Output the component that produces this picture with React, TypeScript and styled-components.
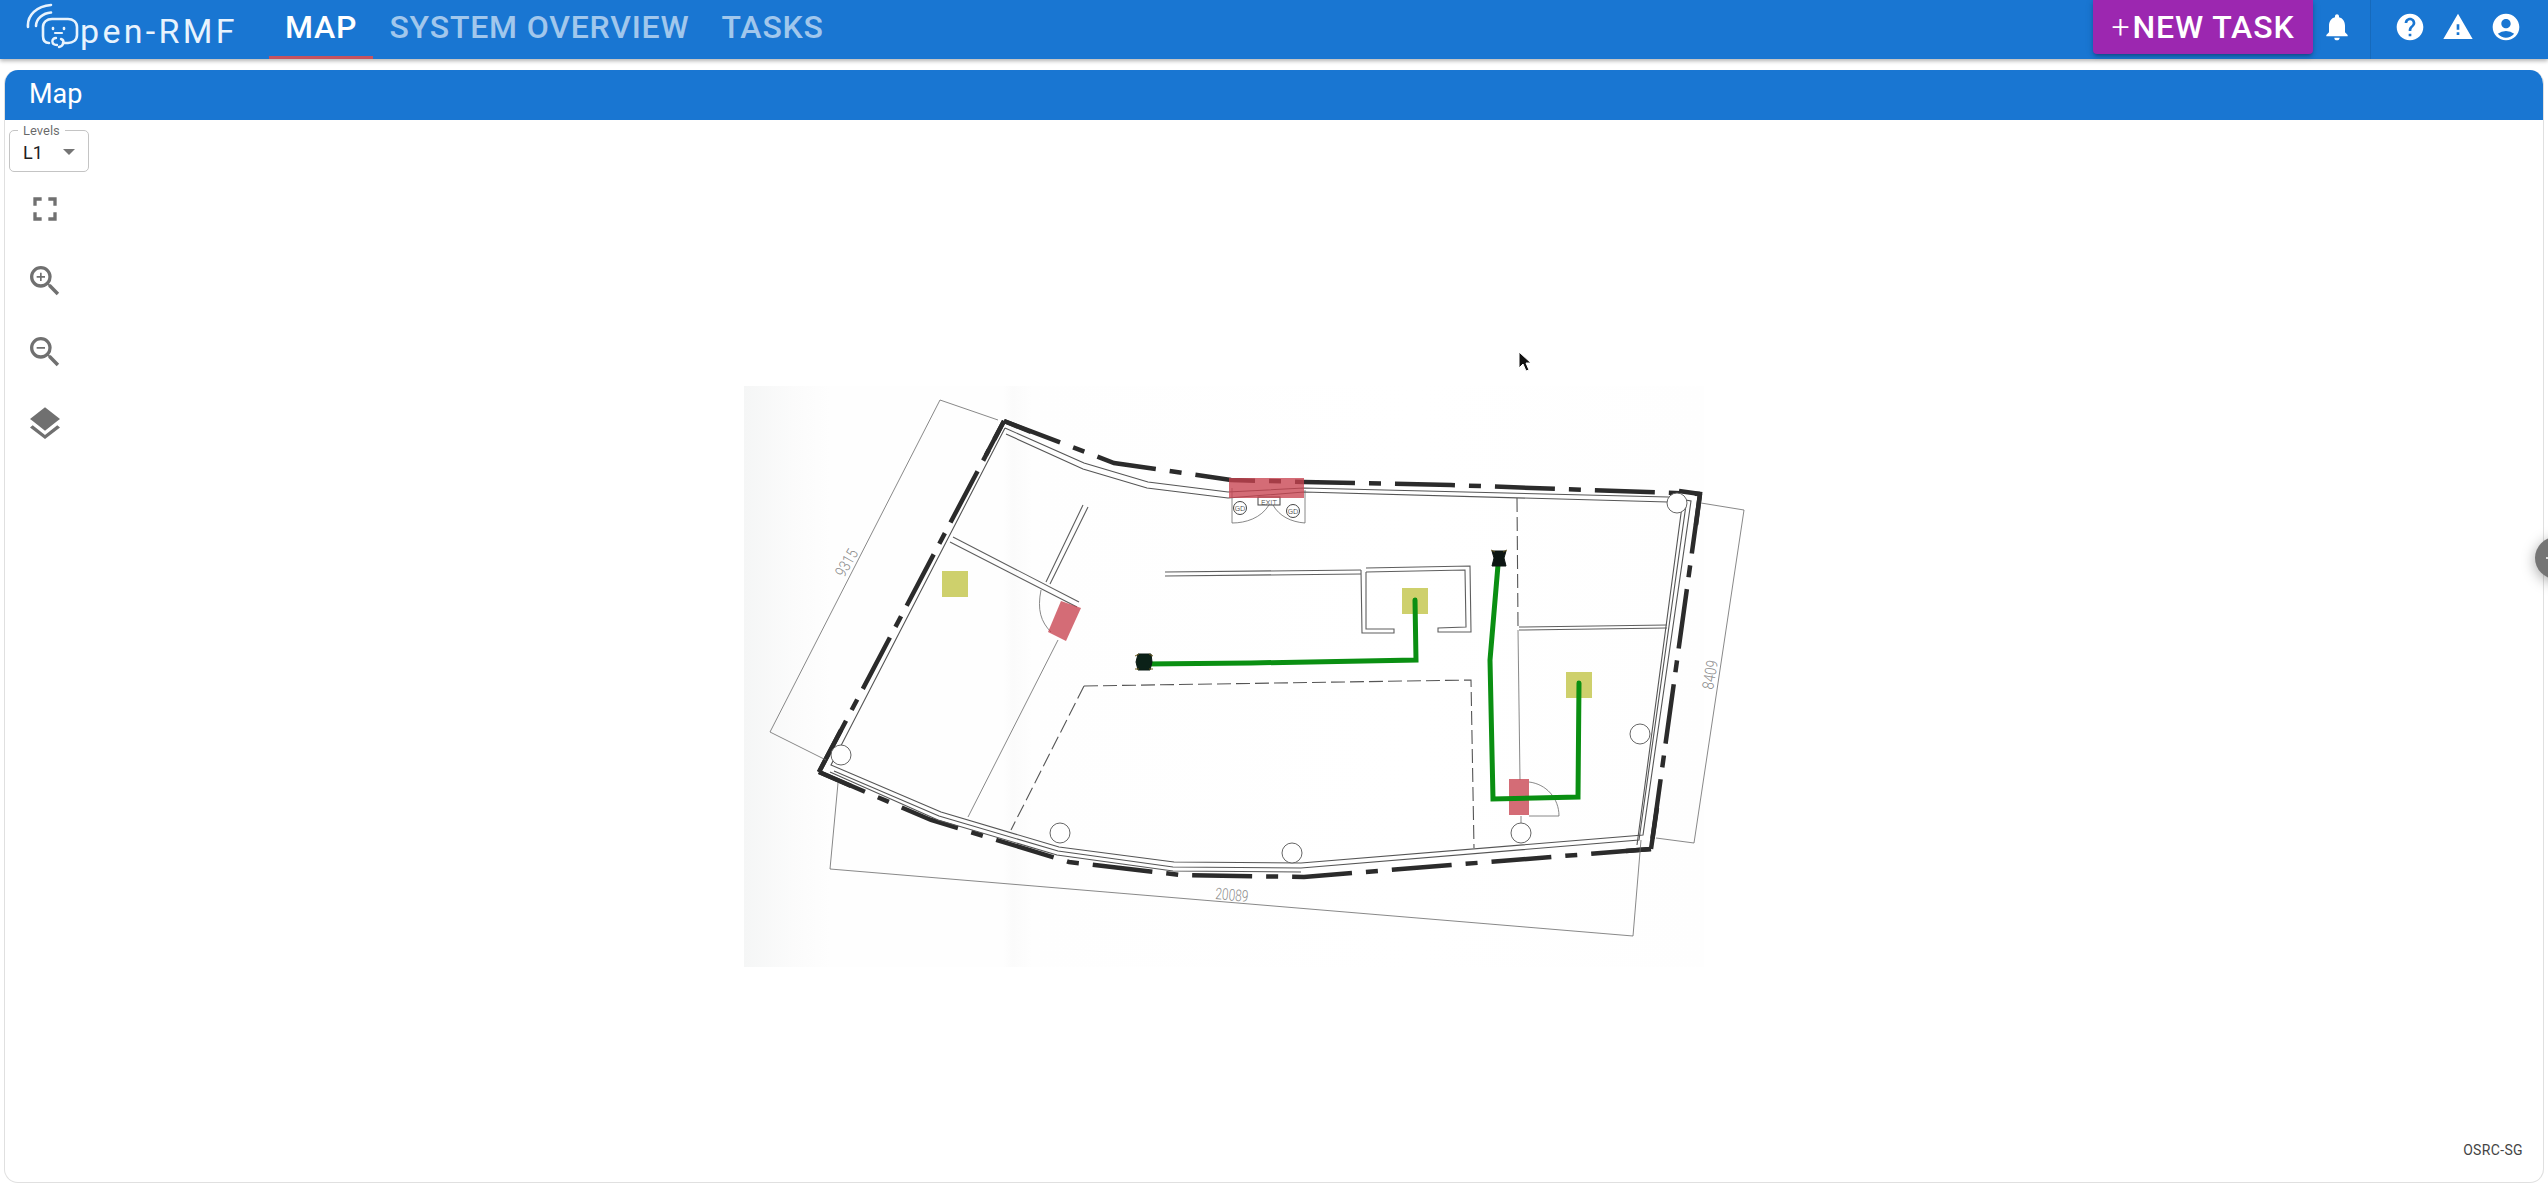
import React from "react";
import styled, { createGlobalStyle } from "styled-components";
import {
  MdNotifications,
  MdHelp,
  MdWarning,
  MdAccountCircle,
  MdFullscreen,
  MdZoomIn,
  MdZoomOut,
  MdLayers,
} from "react-icons/md";

const Global = createGlobalStyle`
  html, body { margin: 0; padding: 0; height: 100%; background: #fff; overflow: hidden; }
  body { font-family: Roboto, "Liberation Sans", sans-serif; }
  #root { height: 100%; }
`;

const Page = styled.div`
  position: relative;
  height: 1189px;
  display: flex;
  flex-direction: column;
  overflow: hidden;
`;

const AppBar = styled.header`
  flex: none;
  height: 59px;
  background: #1976d2;
  box-shadow: 0 2px 4px rgba(0, 0, 0, 0.3);
  display: flex;
  align-items: flex-start;
  padding: 0 26px 0 26px;
  position: relative;
  z-index: 2;
`;

const LogoBox = styled.div`
  width: 243px;
  height: 54px;
  display: flex;
  flex: none;
  color: #e8f3fd;
`;

const LogoMark = styled.svg`
  width: 54px;
  height: 54px;
  flex: none;
`;

const LogoText = styled.span`
  font-family: Roboto, sans-serif;
  font-size: 34px;
  font-weight: 400;
  letter-spacing: 3.3px;
  line-height: 40px;
  margin-top: 11px;
  white-space: nowrap;
`;

const Tabs = styled.nav`
  display: flex;
`;

const Tab = styled.div<{ $active?: boolean }>`
  height: 59px;
  padding: 0 16px 3px;
  box-sizing: border-box;
  display: flex;
  align-items: center;
  font-size: 32px;
  font-weight: 500;
  letter-spacing: 0.82px;
  text-transform: uppercase;
  color: ${(p) => (p.$active ? "#ffffff" : "rgba(255,255,255,0.6)")};
  border-bottom: 3px solid ${(p) => (p.$active ? "#c5525f" : "transparent")};
`;

const Spacer = styled.div`
  flex: 1;
`;

const NewTask = styled.button`
  height: 54px;
  width: 220px;
  border: 0;
  padding: 0;
  background: #9c27b0;
  color: #fff;
  font-family: Roboto, sans-serif;
  font-size: 32px;
  font-weight: 500;
  letter-spacing: 0.9px;
  border-radius: 0 0 4px 4px;
  box-shadow: 0 3px 3px -2px rgba(0, 0, 0, 0.2), 0 3px 4px rgba(0, 0, 0, 0.14),
    0 1px 8px rgba(0, 0, 0, 0.12);
`;

const Plus = styled.span`
  font-weight: 300;
  margin-right: 2px;
`;

const BarIcon = styled.div<{ $gap: number }>`
  height: 54px;
  width: 32px;
  margin-left: ${(p) => p.$gap}px;
  display: flex;
  align-items: center;
  justify-content: center;
  color: #fff;
  font-size: 32px;
`;

const BarDivider = styled.div`
  width: 1px;
  height: 59px;
  margin-left: 17px;
  background: rgba(0, 0, 0, 0.1);
`;

const Card = styled.section`
  flex: none;
  margin: 11px 4px 0 4px;
  height: 1113px;
  box-sizing: border-box;
  border: 1px solid #e0e0e0;
  border-top: 0;
  border-radius: 14px;
  overflow: hidden;
  display: flex;
  flex-direction: column;
  background: #fff;
`;

const CardHeader = styled.h2`
  flex: none;
  height: 50px;
  margin: 0 -1px;
  padding: 0 25px;
  background: #1976d2;
  color: #fff;
  font-size: 27px;
  font-weight: 400;
  line-height: 48px;
`;

const MapBody = styled.div`
  position: relative;
  flex: 1;
  padding: 10px 0 0 4px;
`;

const LevelBox = styled.div`
  position: relative;
  width: 80px;
  height: 42px;
  box-sizing: border-box;
  border: 1px solid #c4c4c4;
  border-radius: 5px;
  display: flex;
  align-items: center;
  justify-content: space-between;
  padding: 2px 13px 0 13px;
  font-size: 18px;
  color: #212121;
`;

const LevelLegend = styled.span`
  position: absolute;
  left: 8px;
  top: -8px;
  padding: 0 5px;
  background: #fff;
  font-size: 13px;
  line-height: 15px;
  color: rgba(0, 0, 0, 0.6);
`;

const Caret = styled.i`
  width: 0;
  height: 0;
  border-left: 6px solid transparent;
  border-right: 6px solid transparent;
  border-top: 6px solid #757575;
`;

const Controls = styled.div`
  display: flex;
  flex-direction: column;
  width: 72px;
  margin-top: 1px;
`;

const ControlButton = styled.div`
  width: 72px;
  height: 71.7px;
  display: flex;
  align-items: center;
  justify-content: center;
  font-size: 40px;
  color: #707070;
`;

const PlanSvg = styled.svg`
  position: absolute;
  left: 739px;
  top: 266px;
  width: 1010px;
  height: 582px;
`;

const PlanLabel = styled.text`
  font-family: Roboto, sans-serif;
  font-weight: 300;
  fill: #8a8a8a;
`;

const CursorSvg = styled.svg`
  position: absolute;
  left: 1513px;
  top: 231px;
  width: 14px;
  height: 22px;
`;

const Attribution = styled.span`
  position: absolute;
  right: 20px;
  bottom: 24px;
  font-size: 14px;
  line-height: 16px;
  letter-spacing: 0.35px;
  color: #444;
`;

const Handle = styled.div`
  position: absolute;
  left: 2535px;
  top: 537px;
  width: 42px;
  height: 42px;
  border-radius: 50%;
  background: #757575;
  box-shadow: 0 3px 14px rgba(0, 0, 0, 0.35);
  z-index: 3;
  &::before {
    content: "";
    position: absolute;
    left: 11px;
    top: 20px;
    width: 4px;
    height: 2px;
    background: #ddd;
  }
`;

const topWall = "M1003 421L1113 463L1230 480L1303 482L1450 485L1699 494";
const rightWall = "M1699 494L1650 849";
const bottomWall = "M1650 849L1450 865L1303 877L1180 875L1068 862L930 820L818 772";
const leftWall = "M818 772L1003 421";

const innerA =
  "M1004 428L1083 463L1147 482L1227 492L1303 488L1667 497L1690 501L1642 835L1300 863L1173 862L1058 847L940 812L830 765L1004 428";
const innerB =
  "M1005 434L1082 469L1146 488L1227 498L1303 492L1667 502L1685 505L1638 840L1300 868L1172 867L1057 851L938 816L833 771";
const innerC = "M1681 506L1636 845M1300 872L1172 871L1056 855L937 820L829 772";

const doubleLines = [
  "M952 537L1078 602M949 542L1076 607",
  "M1082 505L1045 582M1087 507L1049 584",
  "M1164 572L1360 570M1164 576L1360 574",
  "M1365 568L1469 566L1470 632L1437 632L1437 628L1465 627L1464 570L1365 572",
  "M1360 570L1361 633L1393 633L1393 629L1365 629L1365 572",
  "M1518 627L1666 625M1518 630L1666 628",
];

const thinLines = [
  "M1057 640L967 817",
  "M1517 630L1519 780",
  "M1520 816L1520 823",
  "M939 400L769 732",
  "M939 400L997 420",
  "M769 732L825 760",
  "M829 869L1632 936",
  "M829 869L837 783",
  "M1632 936L1640 840",
  "M1743 510L1693 843",
  "M1700 503L1743 510",
  "M1655 838L1693 843",
  "M1040 590C1036 610 1040 622 1050 632",
  "M1528 782C1545 784 1558 798 1558 816L1528 816",
  "M1231 488L1231 523C1245 523 1260 518 1268 505",
  "M1304 490L1304 523C1290 522 1278 516 1272 505",
];

const dashed = [
  "M1516 498L1517 627",
  "M1083 686L1470 680L1473 848",
  "M1083 686L1010 830",
];

const columns: [number, number][] = [
  [840, 755],
  [1059, 833],
  [1291, 853],
  [1520, 833],
  [1639, 734],
  [1676, 503],
];

const App = () => (
  <Page>
    <Global />
    <AppBar>
      <LogoBox>
        <LogoMark viewBox="0 0 54 54" fill="none" stroke="#e8f3fd" strokeLinecap="round" strokeLinejoin="round">
          <path d="M2 27C1 15 11 6 25 5" strokeWidth="2.6" />
          <path d="M10 26C10 19 17 13 25 12.5" strokeWidth="2.6" />
          <path
            d="M23 43C19 43 17 40 17 36L17 27C17 22 21 19 26 19L42 19C47 19 51 22 51 27L51 35C51 40 47 43 42 43L37 43"
            strokeWidth="2.6"
          />
          <path d="M30 38C25 38 25 45 31 45M35 39C39 40 38 46 33 47" strokeWidth="2.4" />
          <path d="M27 28L27 29M38 28L38 29" strokeWidth="2.6" />
          <path d="M29 33L36 33" strokeWidth="2.2" />
        </LogoMark>
        <LogoText>pen-RMF</LogoText>
      </LogoBox>
      <Tabs>
        <Tab $active>Map</Tab>
        <Tab>System Overview</Tab>
        <Tab>Tasks</Tab>
      </Tabs>
      <Spacer />
      <NewTask>
        <Plus>+</Plus>NEW TASK
      </NewTask>
      <BarIcon $gap={8}>
        <MdNotifications />
      </BarIcon>
      <BarDivider />
      <BarIcon $gap={23}>
        <MdHelp />
      </BarIcon>
      <BarIcon $gap={16}>
        <MdWarning />
      </BarIcon>
      <BarIcon $gap={16}>
        <MdAccountCircle />
      </BarIcon>
    </AppBar>
    <Card>
      <CardHeader>Map</CardHeader>
      <MapBody>
        <LevelBox>
          <LevelLegend>Levels</LevelLegend>
          L1
          <Caret />
        </LevelBox>
        <Controls>
          <ControlButton>
            <MdFullscreen />
          </ControlButton>
          <ControlButton>
            <MdZoomIn />
          </ControlButton>
          <ControlButton>
            <MdZoomOut />
          </ControlButton>
          <ControlButton>
            <MdLayers />
          </ControlButton>
        </Controls>
        <PlanSvg viewBox="743 386 1010 582" fill="none">
          <defs>
            <linearGradient id="paper" x1="0" x2="1" y1="0" y2="0">
              <stop offset="0" stopColor="#f5f6f6" />
              <stop offset="0.05" stopColor="#fbfbfb" />
              <stop offset="0.09" stopColor="#fefefe" />
              <stop offset="0.27" stopColor="#fefefe" />
              <stop offset="0.28" stopColor="#fbfbfb" />
              <stop offset="0.3" stopColor="#fefefe" />
              <stop offset="0.7" stopColor="#ffffff" />
              <stop offset="1" stopColor="#fefefe" />
            </linearGradient>
          </defs>
          <rect x="743" y="386" width="960" height="581" fill="url(#paper)" />

          <g stroke="#2b2b2b" strokeWidth="4.5" strokeDasharray="60 14 12 14">
            <path d={topWall} />
            <path d={rightWall} strokeDasharray="60 12 12 12" />
            <path d={bottomWall} />
            <path d={leftWall} strokeDasharray="58 12 12 12" />
          </g>
          <path d="M1678 491L1699 494L1695 525M1003 421L985 455M1003 421L1030 432" stroke="#2b2b2b" strokeWidth="4.5" />
          <path d="M1650 849L1656 808M1650 849L1625 851M818 772L840 730M818 772L850 786" stroke="#2b2b2b" strokeWidth="4.5" />

          <g stroke="#555" strokeWidth="1.1">
            <path d={innerA} />
            <path d={innerB} />
            <path d={innerC} />
          </g>
          <g stroke="#5e5e5e" strokeWidth="1.1">
            {doubleLines.map((d) => (
              <path key={d} d={d} />
            ))}
          </g>
          <g stroke="#6a6a6a" strokeWidth="0.8">
            {thinLines.map((d) => (
              <path key={d} d={d} />
            ))}
          </g>
          <g stroke="#555" strokeWidth="1.1" strokeDasharray="14 5">
            {dashed.map((d) => (
              <path key={d} d={d} />
            ))}
          </g>
          <g stroke="#666" strokeWidth="1" fill="#fff">
            {columns.map(([cx, cy]) => (
              <circle key={cx} cx={cx} cy={cy} r="10" />
            ))}
          </g>

          <g stroke="#444" strokeWidth="1">
            <circle cx="1239" cy="508" r="6.5" fill="#fff" />
            <circle cx="1292" cy="511" r="6.5" fill="#fff" />
            <rect x="1257" y="497" width="22" height="8" fill="#fff" />
          </g>
          <PlanLabel x="1268" y="504.5" fontSize="8" textAnchor="middle" style={{ fill: "#444" }}>
            EXIT
          </PlanLabel>
          <PlanLabel x="1239" y="511" fontSize="8" textAnchor="middle" style={{ fill: "#333" }}>
            GD
          </PlanLabel>
          <PlanLabel x="1292" y="514" fontSize="8" textAnchor="middle" style={{ fill: "#333" }}>
            GD
          </PlanLabel>

          <PlanLabel
            fontSize="16"
            textLength="29"
            lengthAdjust="spacingAndGlyphs"
            transform="translate(843 578) rotate(-60)"
          >
            9315
          </PlanLabel>
          <PlanLabel
            fontSize="16"
            textLength="29"
            lengthAdjust="spacingAndGlyphs"
            transform="translate(1712 690) rotate(-80)"
          >
            8409
          </PlanLabel>
          <PlanLabel
            fontSize="16"
            textLength="33"
            lengthAdjust="spacingAndGlyphs"
            transform="translate(1214 899) rotate(5)"
          >
            20089
          </PlanLabel>

          <g fill="#ced06c">
            <rect x="941" y="571" width="26" height="26" />
            <rect x="1401" y="588" width="26" height="26" />
            <rect x="1565" y="672" width="26" height="26" />
          </g>
          <g fill="#c8424f" fillOpacity="0.78">
            <rect x="1228" y="478" width="75" height="20" />
            <rect x="1508" y="779" width="20" height="36" />
            <path d="M1060 601L1080 608L1065 641L1047 632Z" />
          </g>

          <g stroke="#0a8f12" strokeWidth="5" strokeLinejoin="miter" strokeLinecap="round">
            <path d="M1143 664L1250 663L1415 660L1414 600" />
            <path d="M1497 565L1489 660L1492 799L1577 797L1578 683" />
          </g>

          <g fill="#0b2118" stroke="#0b1a14" strokeWidth="1">
            <path d="M1137 654L1150 654L1151 662L1149 670L1137 670L1135 662Z" />
            <path d="M1134 656L1138 654M1134 669L1138 669M1152 656L1148 654M1152 669L1148 669" stroke="#6b5a1e" />
          </g>
          <g fill="#0d1613" stroke="#0d1613" strokeWidth="1">
            <path d="M1491 551L1505 551L1503 558L1505 566L1491 566L1493 558Z" />
            <path d="M1490 550L1494 552M1506 550L1502 552" stroke="#5c4f1c" />
          </g>
        </PlanSvg>
        <CursorSvg viewBox="0 0 14 22">
          <path d="M1 1L1 17L5 13L8 20L11 19L8 12L13 12Z" fill="#111" stroke="#fff" strokeWidth="1" />
        </CursorSvg>
        <Attribution>OSRC-SG</Attribution>
      </MapBody>
    </Card>
    <Handle />
  </Page>
);

export default App;
